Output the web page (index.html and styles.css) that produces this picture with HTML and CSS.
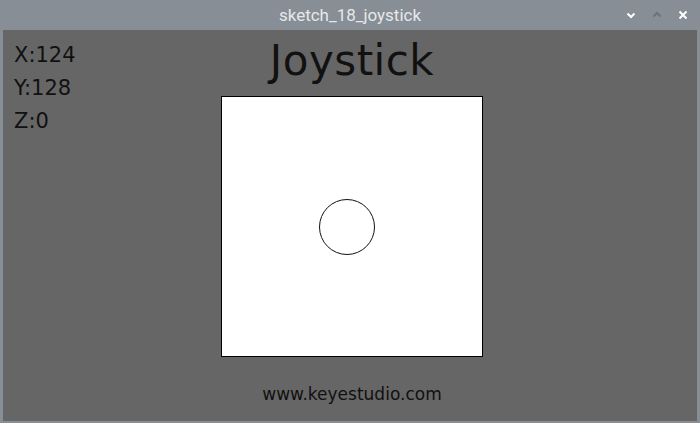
FILE: index.html
```html
<!DOCTYPE html>
<html>
<head>
<meta charset="utf-8">
<link rel="stylesheet" href="styles.css">
</head>
<body>
<div class="window">
  <div class="titlebar">
    <span class="title">sketch_18_joystick</span>
    <div class="controls">
      <svg class="ctl" width="10" height="10" viewBox="0 0 10 10"><path d="M1.5 3.5 L5 7 L8.5 3.5" fill="none" stroke="#ffffff" stroke-width="2"/></svg>
      <svg class="ctl" width="10" height="10" viewBox="0 0 10 10"><path d="M1.5 6.5 L5 3 L8.5 6.5" fill="none" stroke="#6c737b" stroke-width="2"/></svg>
      <svg class="ctl" width="10" height="10" viewBox="0 0 10 10"><path d="M1.5 1.5 L8.5 8.5 M8.5 1.5 L1.5 8.5" fill="none" stroke="#ffffff" stroke-width="2"/></svg>
    </div>
  </div>
  <div class="canvas">
    <div class="readout">
      <div class="line">X:124</div>
      <div class="line">Y:128</div>
      <div class="line">Z:0</div>
    </div>
    <div class="center">
      <h1 class="heading">Joystick</h1>
      <div class="pad">
        <div class="knob"></div>
      </div>
      <div class="footer">www.keyestudio.com</div>
    </div>
  </div>
</div>
</body>
</html>
```
FILE: styles.css
```css
html, body {
  margin: 0;
  padding: 0;
  width: 700px;
  height: 423px;
  overflow: hidden;
  background: #e9eaeb;
}
.window {
  width: 700px;
  height: 423px;
  display: flex;
  flex-direction: column;
  background: #878e96;
}
.titlebar {
  height: 30px;
  position: relative;
  display: flex;
  align-items: center;
  justify-content: center;
  flex: none;
}
.title {
  font-family: Roboto, "Liberation Sans", sans-serif;
  font-size: 17px;
  color: #e6e8ea;
}
.controls {
  position: absolute;
  right: 12px;
  top: 10px;
  display: flex;
  gap: 16px;
  align-items: center;
}
.ctl { display: block; }
.canvas {
  position: relative;
  margin: 0 3px 2px 3px;
  flex: 1;
  background: #666666;
}
.readout {
  position: absolute;
  left: 11px;
  top: 9px;
  font-family: "DejaVu Sans", sans-serif;
  font-size: 21px;
  color: #111;
  line-height: 33px;
}
.center {
  display: flex;
  flex-direction: column;
  align-items: center;
  padding-left: 4px;
}
.heading {
  margin: 5px 0 0 0;
  font-family: "DejaVu Sans", sans-serif;
  font-weight: normal;
  font-size: 42px;
  line-height: 51px;
  letter-spacing: 0.5px;
  color: #111;
}
.pad {
  margin-top: 10px;
  width: 260px;
  height: 259px;
  background: #fff;
  border: 1px solid #000;
  display: flex;
  align-items: center;
  justify-content: center;
}
.knob {
  width: 56px;
  height: 56px;
  margin-right: 10px;
  box-sizing: border-box;
  border: 1.5px solid #111;
  border-radius: 50%;
  background: #fff;
}
.footer {
  margin-top: 27px;
  font-family: "DejaVu Sans", sans-serif;
  font-size: 17px;
  color: #111;
}
```
